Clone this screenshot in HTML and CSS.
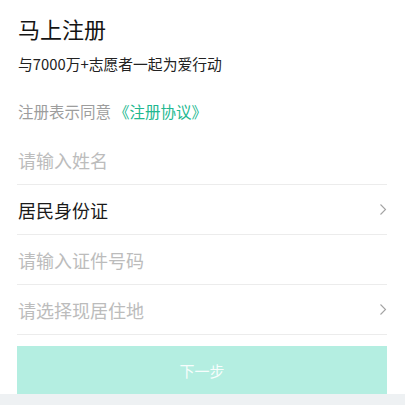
FILE: index.html
```html
<!DOCTYPE html>
<html lang="zh-CN">
<head>
<meta charset="utf-8">
<title>马上注册</title>
<link rel="stylesheet" href="styles.css">
</head>
<body>
<main class="page">
  <h1 class="title">马上注册</h1>
  <p class="subtitle">与7000万+志愿者一起为爱行动</p>
  <p class="agree">注册表示同意<span class="link">《注册协议》</span></p>
  <div class="form">
    <div class="row"><span class="placeholder">请输入姓名</span></div>
    <div class="row"><span class="value">居民身份证</span><svg class="chev" width="8" height="13" viewBox="0 0 8 13"><polyline points="1.5,1.5 6.5,6.5 1.5,11.5" fill="none" stroke="#a3a3a3" stroke-width="1.1"/></svg></div>
    <div class="row"><span class="placeholder">请输入证件号码</span></div>
    <div class="row"><span class="placeholder">请选择现居住地</span><svg class="chev" width="8" height="13" viewBox="0 0 8 13"><polyline points="1.5,1.5 6.5,6.5 1.5,11.5" fill="none" stroke="#a3a3a3" stroke-width="1.1"/></svg></div>
  </div>
  <button class="next">下一步</button>
</main>
<div class="bottom-bar"></div>
</body>
</html>
```
FILE: styles.css
```css
html, body {
  margin: 0;
  padding: 0;
  background: #ffffff;
  font-family: "Noto Sans CJK SC", "Noto Sans", sans-serif;
}
.page {
  padding: 0 18px 0 17px;
  display: flex;
  flex-direction: column;
}
.title {
  margin: 13px 0 0 1px;
  font-size: 22px;
  line-height: 30px;
  font-weight: 400;
  color: #141414;
}
.subtitle {
  margin: 11px 0 0 1px;
  font-size: 14.8px;
  line-height: 20px;
  color: #222222;
}
.agree {
  margin: 26px 0 0 1px;
  font-size: 15.5px;
  line-height: 22px;
  color: #9d9d9d;
}
.link {
  margin-left: 3px;
  color: #22b890;
}
.form {
  margin-top: 13px;
  display: flex;
  flex-direction: column;
}
.row {
  height: 49px;
  border-bottom: 1px solid #ececec;
  display: flex;
  align-items: center;
  justify-content: space-between;
  padding-left: 1px;
  font-size: 18px;
}
.placeholder {
  color: #bcbcbc;
}
.value {
  color: #1a1a1a;
}
.chev {
  display: block;
  margin-right: 0;
}
.next {
  margin-top: 11px;
  height: 48px;
  border: none;
  background: #b4eee1;
  color: rgba(255,255,255,0.92);
  font-family: "Noto Sans CJK SC", "Noto Sans", sans-serif;
  font-size: 15px;
  padding: 0;
}
.bottom-bar {
  height: 12px;
  background: #eef1f3;
}
```
